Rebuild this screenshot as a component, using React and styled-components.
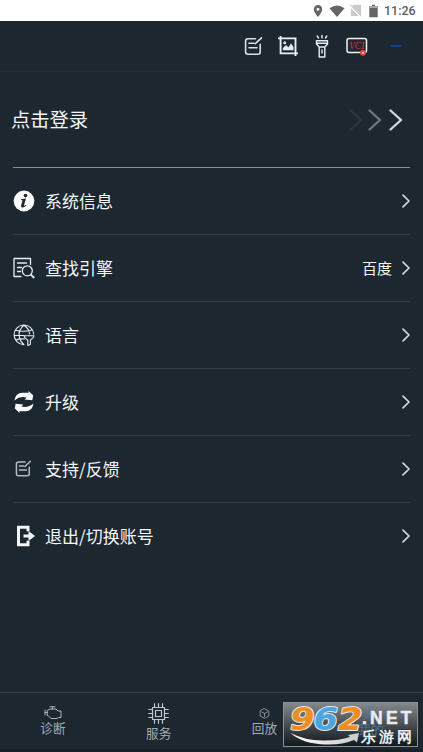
import React from "react";
import styled, { createGlobalStyle } from "styled-components";

const Global = createGlobalStyle`
  * { box-sizing: border-box; }
  body { margin: 0; background: #1d2730; }
`;

const Screen = styled.div`
  width: 423px;
  height: 752px;
  display: flex;
  flex-direction: column;
  overflow: hidden;
  background: #1d2730;
  color: #f4f6f7;
  font-family: "Noto Sans CJK SC", sans-serif;
  border-bottom: 3px solid #17202a;
`;

const StatusBar = styled.header`
  height: 21px;
  flex: none;
  display: flex;
  align-items: center;
  justify-content: flex-end;
  padding-right: 7px;
  background: #fefefe;
`;

const Clock = styled.span`
  width: 32px;
  margin-left: 6px;
  color: #5e5e5e;
  font: 500 12.5px/21px Roboto, sans-serif;
  white-space: nowrap;
`;

const Toolbar = styled.div`
  height: 51px;
  flex: none;
  display: flex;
  align-items: center;
  justify-content: flex-end;
  padding-right: 21px;
  border-bottom: 1px solid #232d37;
`;

const Icon = styled.svg`
  display: block;
  flex: none;
  overflow: visible;
  margin-left: ${(p) => p.$gap || 0}px;
`;

const Content = styled.main`
  flex: 1;
  padding: 0 13px;
`;

const Login = styled.div`
  height: 96px;
  display: flex;
  align-items: center;
  justify-content: space-between;
  border-bottom: 1px solid #87909a;
  padding-right: 7px;
`;

const LoginText = styled.span`
  font-size: 19.3px;
  line-height: 28px;
  margin-left: -2px;
  padding-bottom: 2px;
`;

const Row = styled.div`
  height: 67px;
  display: flex;
  align-items: center;
  border-bottom: 1px solid ${(p) => (p.$last ? "transparent" : "#323c46")};
`;

const IconSlot = styled.div`
  width: 32px;
  flex: none;
`;

const Label = styled.span`
  flex: 1;
  font-size: 17px;
  line-height: 25px;
  padding-bottom: 2px;
  white-space: nowrap;
`;

const Value = styled.span`
  font-size: 15px;
  line-height: 22px;
  padding-bottom: 1px;
  margin-right: 9px;
`;

const ArrowSlot = styled.div`
  margin-right: -1px;
`;

const Tabs = styled.nav`
  height: 57px;
  flex: none;
  display: grid;
  grid-template-columns: repeat(4, 1fr);
  border-top: 1px solid #35404b;
`;

const Tab = styled.div`
  display: flex;
  flex-direction: column;
  align-items: center;
  padding-top: ${(p) => p.$top}px;
  color: #a4adb5;
`;

const TabLabel = styled.span`
  font-size: 12.6px;
  line-height: 18px;
`;

const Badge = styled.div`
  position: absolute;
  left: 283px;
  top: 702px;
  width: 135px;
  height: 45px;
`;

const Line = ({ w, h, gap, width = 1, color = "#e9edef", children }) => (
  <Icon width={w} height={h} viewBox={`0 0 ${w} ${h}`} $gap={gap} fill="none"
    stroke={color} strokeWidth={width} strokeLinecap="round" strokeLinejoin="round">
    {children}
  </Icon>
);

const Chevron = () => (
  <ArrowSlot>
    <Line w={10} h={14} width={1.7} color="#d2d7da"><path d="M2 1.2 8 7 2 12.8" /></Line>
  </ArrowSlot>
);

const Note = ({ small }) => (
  <Icon width={small ? 22 : 19} height={small ? 19 : 20} viewBox={small ? "-2.3 .9 25 21.6" : "0 0.6 19 20"}
    fill="none" stroke={small ? "#b4bac0" : "#dce0e3"} strokeWidth={small ? 1.7 : 1.6} strokeLinecap="round" strokeLinejoin="round">
    <path d="M11.5 3.3H4Q1.6 3.3 1.6 5.6V16.6Q1.6 18.8 4 18.8H14Q16.2 18.8 16.2 16.6V9M5 7.8h4.8M5 12.3h8M11.3 8.3 17.5 2.4" />
  </Icon>
);

const Info = () => (
  <Icon width="22" height="22" viewBox="0 0 22 22">
    <circle cx="11" cy="11" r="10.4" fill="#fbfcfc" />
    <circle cx="12.5" cy="5.6" r="1.8" fill="#1d2730" />
    <path d="M8 9.2 13 8.4 10.9 15.5Q10.8 16.4 13.1 14.8L13.4 15.4Q10.5 18.1 8.6 17.3 7.7 16.9 8.2 15.2L9.5 10.5Q9.5 9.9 8 10Z" fill="#1d2730" />
  </Icon>
);

const Search = () => (
  <Line w={22} h={22} width={1.3}>
    <path d="M8 19.5H1V1.5H17.5V7.5M4.5 6H13.5M4.5 10.5H8.5M4.5 14.5H7.5" />
    <circle cx="14.3" cy="13.8" r="5" /><path d="m18 17.8 2.8 2.7" strokeWidth="1.8" />
  </Line>
);

const Globe = () => (
  <Line w={22} h={22} width={1.1}>
    <path d="M11 20.6A9.8 9.8 0 1 1 20.7 10M2.8 6.2Q11 8.3 19 6M1.2 11.5H11M2.8 16Q7 14.6 11.5 15M11 1.2Q4.5 6 6.5 14 7.5 18 11 20.6M11 1.2Q16.5 5 16.5 10" />
    <path d="M11 11.8H21Q20.6 14 17.3 16.2V20.5L14.8 21.5V16.2Q11.4 14 11 11.8Z" fill="#1d2730" />
  </Line>
);

const Refresh = () => (
  <Icon width="22" height="22" viewBox="0 0 22 22" fill="#f7f9fa">
    <path d="M1.4 9.4Q2.5 1.8 9.5 1.7H15.7L15.4 0 20.2 4.3 19.3 9.3 11.6 8.4 13.6 6.6Q7 4.8 1.4 9.4Z" />
    <path d="M20.4 12.4Q19.5 20 12.5 20.3H6.3L6.6 22 1.8 17.5 2.6 12.7 10.3 13.6 8.4 15.4Q15 17.2 20.4 12.4Z" />
  </Icon>
);

const Exit = () => (
  <Icon width="22" height="22" viewBox="0 0 22 22">
    <path d="M15 6.3V2.2H5.5V19.8H15V15.8" fill="none" stroke="#f4f6f7" strokeWidth="3" />
    <path d="M10.5 9.4H15.5V6L22 11 15.5 16V12.6H10.5Z" fill="#f4f6f7" />
  </Icon>
);

const menu = [
  { label: "系统信息", icon: <Info /> },
  { label: "查找引擎", icon: <Search />, value: "百度" },
  { label: "语言", icon: <Globe /> },
  { label: "升级", icon: <Refresh /> },
  { label: "支持/反馈", icon: <Note small /> },
  { label: "退出/切换账号", icon: <Exit /> },
];

const Watermark = () => (
  <Badge>
    <Icon width="135" height="45" viewBox="0 0 135 45">
      <defs>
        <linearGradient id="plate" x1="0" y1="0" x2="0" y2="1">
          <stop offset="0" stopColor="#858a8e" /><stop offset=".45" stopColor="#4d5357" /><stop offset="1" stopColor="#11171b" />
        </linearGradient>
        <linearGradient id="swoosh"><stop stopColor="#fff" /><stop offset="1" stopColor="#c6cbce" /></linearGradient>
      </defs>
      <rect x=".5" y=".5" width="134" height="44" fill="url(#plate)" stroke="#8a9196" />
      <g fill="none" stroke="#4288b8" strokeWidth="1.2" opacity=".8">
        <circle cx="87" cy="8.5" r="3.5" /><path d="M80.5 18Q87 10 93.5 18" />
      </g>
      <text x="75" y="32" fontSize="12.6" fill="#3f86b8" opacity=".8">我的</text>
      <g fontFamily="DejaVu Sans, sans-serif" fontWeight="700" fontStyle="italic" fontSize="32"
        stroke="#e3e8ea" strokeWidth="2" strokeLinejoin="round" paintOrder="stroke">
        <text x="7" y="27.8" textLength="24.5" lengthAdjust="spacingAndGlyphs" fill="#ef8d20">9</text>
        <text x="30.5" y="27.8" textLength="24.5" lengthAdjust="spacingAndGlyphs" fill="#4ba6e0">6</text>
        <text x="55" y="27.8" textLength="24.5" lengthAdjust="spacingAndGlyphs" fill="#ef8d20">2</text>
      </g>
      <path d="M7.5 31Q23 39 42 38.5 56 38.5 67 35L65 33 76 31 74 40.5 71 38Q59 43 43 42.5 20 42 7.5 31Z" fill="url(#swoosh)" />
      <text x="79" y="22" fill="#e9ecee" stroke="#e9ecee" strokeWidth=".5" fontFamily="Liberation Sans, sans-serif" fontWeight="700" fontSize="17.5" letterSpacing="3.2">.NET</text>
      <text x="78" y="40" fill="#eceff0" stroke="#252b2f" strokeWidth="1" paintOrder="stroke" fontSize="14.5" fontWeight="900" letterSpacing="3.2">乐游网</text>
    </Icon>
  </Badge>
);

export default function App() {
  return (
    <>
      <Global />
      <Screen>
        <StatusBar>
          <Icon width="10" height="14" viewBox="0 0 10 14" fill="#656565">
            <path fillRule="evenodd" d="M5 1A4.2 4.2 0 0 0 .8 5.2C.8 8.3 5 13 5 13S9.2 8.3 9.2 5.2A4.2 4.2 0 0 0 5 1ZM5 3.7a1.5 1.5 0 1 1 0 3 1.5 1.5 0 0 1 0-3Z" />
          </Icon>
          <Icon width="16" height="12" viewBox="0 0 16 12" fill="#656565" $gap={6}><path d="M.5 3.3Q8-2.5 15.5 3.3L8 12Z" /></Icon>
          <Icon width="12" height="13" viewBox="0 0 12 13" $gap={5}>
            <path d="M1 3 3.5.8H11V12H1Z" fill="#c9c9c9" /><path d="m0 1.8 11 11" stroke="#fefefe" strokeWidth="2.2" /><path d="m.4.8 10.8 11.5" stroke="#bcbcbc" strokeWidth="1" />
          </Icon>
          <Icon width="9" height="14" viewBox="0 0 9 14" $gap={7}><path d="M.3 2H3V.7H6V2H8.7V13.3H.3Z" fill="#656565" /><path d="M.3 2H8.7V4H.3Z" fill="#aaa" /></Icon>
          <Clock>11:26</Clock>
        </StatusBar>
        <Toolbar>
          <Note />
          <Line w={20} h={20} gap={15} width={1.9}>
            <path d="M0 2.4H17.5V20M2.6 0V17.4H20" strokeLinecap="butt" strokeLinejoin="miter" />
            <path d="M5 14V12L8 9.3 10.5 11.5 13 7.5 15.3 11V14Z" fill="#e9edef" strokeWidth=".3" /><circle cx="6.7" cy="6.7" r=".6" />
          </Line>
          <Line w={14} h={23} gap={17} width={1.4}>
            <path d="M7 3V.5M3.5 3 2.2 1M10.5 3 11.8 1M1.5 5.7H12.5V9L9.8 12V22H4.2V12L1.5 9Z" />
            <path d="M2 8.3H12M5 12H9M7 15v3" />
          </Line>
          <Icon width="22" height="20" viewBox="0 0 22 20" $gap={17}>
            <rect x="1" y="2.5" width="19.5" height="14" rx="2" fill="#24272f" stroke="#f0f2f3" strokeWidth="1.5" />
            <text x="3" y="13.2" fontFamily="Liberation Serif, serif" fontStyle="italic" fontSize="10.5" textLength="15.5" lengthAdjust="spacingAndGlyphs" fill="#c93740">VCI</text>
            <circle cx="17" cy="16.8" r="3" fill="#e04445" /><path d="m16 15.8 2 2m0-2-2 2" stroke="#fff" strokeWidth=".8" />
          </Icon>
          <Icon width="12" height="4" viewBox="0 0 12 4" $gap={22}><path d="M.5 2H11.5" stroke="#123f8b" strokeWidth="2" /></Icon>
        </Toolbar>
        <Content>
          <Login>
            <LoginText>点击登录</LoginText>
            <Line w={54} h={22} width={2.3}>
              <path d="m1.5 1.5 10.5 9.5-10.5 9.5" stroke="#2c363f" />
              <path d="m20.5 1.5 10.5 9.5-10.5 9.5" stroke="#707980" />
              <path d="m41.5 1.5 10.5 9.5-10.5 9.5" stroke="#d7dbdd" />
            </Line>
          </Login>
          {menu.map((item, i) => (
            <Row key={item.label} $last={i === menu.length - 1}>
              <IconSlot>{item.icon}</IconSlot>
              <Label>{item.label}</Label>
              {item.value && <Value>{item.value}</Value>}
              <Chevron />
            </Row>
          ))}
        </Content>
        <Tabs>
          <Tab $top={13}>
            <Line w={18} h={13} width={1} color="#aeb6bd">
              <path d="M6 .8H11M8.5 1V3M1 4V9M1 6.5H3.2V4.5L6 3H12L14 5H17V11.5H14.5L13 12.5H7L4 9.5H3.2V6.5" />
            </Line>
            <TabLabel>诊断</TabLabel>
          </Tab>
          <Tab $top={10}>
            <Line w={21} h={21} width={1.2} color="#bfc6cb">
              <path d="M4.5 4.5H16.5V16.5H4.5ZM7.5 7.5H13.5V13.5H7.5ZM6.5.7V4M10.5.7V4M14.5.7V4M6.5 17V20.3M10.5 17V20.3M14.5 17V20.3M.7 6.5H4M.7 10.5H4M.7 14.5H4M17 6.5H20.3M17 10.5H20.3M17 14.5H20.3" />
            </Line>
            <TabLabel>服务</TabLabel>
          </Tab>
          <Tab $top={15}>
            <Line w={11} h={11} width={0.9} color="#939da5"><path d="M5.5.7 9.8 3V8L5.5 10.4 1.2 8V3ZM2.8 4 5.5 5.5 8.2 4M5.5 5.5V8.5" /></Line>
            <TabLabel>回放</TabLabel>
          </Tab>
        </Tabs>
      </Screen>
      <Watermark />
    </>
  );
}
